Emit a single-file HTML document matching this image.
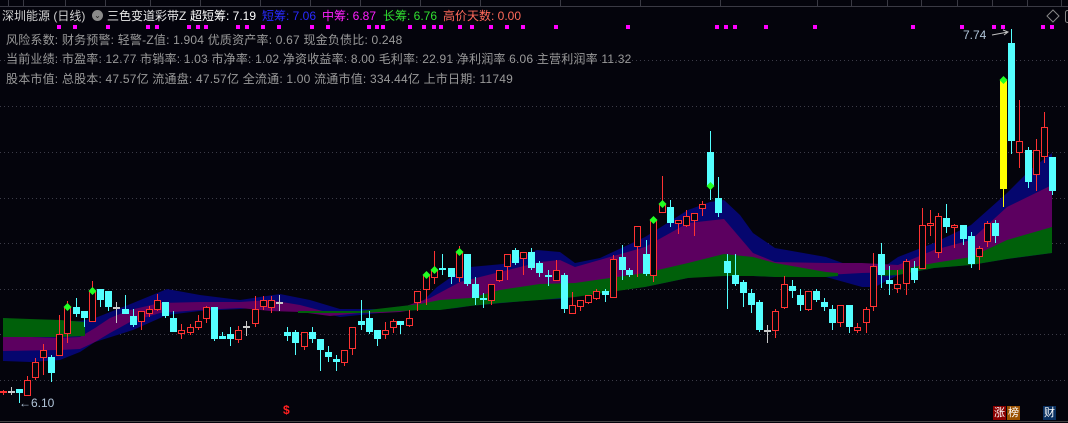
<!DOCTYPE html>
<html><head><meta charset="utf-8">
<style>
html,body{margin:0;padding:0;background:#04040c;}
body{width:1068px;height:423px;position:relative;overflow:hidden;font-family:"Liberation Sans","Noto Sans CJK SC",sans-serif;font-size:12px;}
.t{position:absolute;white-space:nowrap;line-height:14px;}
.l{letter-spacing:0.2px}
svg{position:absolute;left:0;top:0;}
</style></head><body>
<svg id="s" width="1068" height="423" viewBox="0 0 1068 423"></svg>
<div class="t" style="left:2px;top:9px;color:#d0d0d0">深圳能源 (日线)</div>
<div class="t" style="left:92px;top:10px;width:11px;height:11px;border-radius:50%;background:#8a8a8a;color:#222;font-size:8px;line-height:11px;text-align:center">⌄</div>
<div class="t" style="left:107px;top:9px;color:#e8e8e8">三色变道彩带Z</div>
<div class="t" style="left:190px;top:9px;color:#ffffff">超短筹: 7.19</div>
<div class="t" style="left:262px;top:9px;color:#2a2aff">短筹: 7.06</div>
<div class="t" style="left:322px;top:9px;color:#ff20ff">中筹: 6.87</div>
<div class="t" style="left:383px;top:9px;color:#30e030">长筹: 6.76</div>
<div class="t" style="left:443px;top:9px;color:#ff6a5a">高价天数: 0.00</div>
<div class="t l" style="left:6px;top:33px;color:#9a9a9a">风险系数: 财务预警: 轻警-Z值: 1.904 优质资产率: 0.67 现金负债比: 0.248</div>
<div class="t l" style="left:6px;top:52px;color:#9a9a9a">当前业绩: 市盈率: 12.77 市销率: 1.03 市净率: 1.02 净资收益率: 8.00 毛利率: 22.91 净利润率 6.06 主营利润率 11.32</div>
<div class="t l" style="left:6px;top:72px;color:#9a9a9a">股本市值: 总股本: 47.57亿 流通盘: 47.57亿 全流通: 1.00 流通市值: 334.44亿 上市日期: 11749</div>
<div class="t" style="left:963px;top:28px;color:#b0c4d8;font-size:12px">7.74</div>
<div class="t" style="left:19px;top:396px;color:#b0c4d8;font-size:12px">←6.10</div>
<div class="t" style="left:283px;top:403px;color:#ff2020;font-size:12px;font-weight:bold">$</div>
<div class="t" style="left:993px;top:406px;background:#8a0000;color:#fff;font-size:11px;line-height:14px;padding:0 1px">涨</div>
<div class="t" style="left:1007px;top:406px;background:#9a5000;color:#fff;font-size:11px;line-height:14px;padding:0 1px">榜</div>
<div class="t" style="left:1043px;top:406px;background:#0a3060;color:#fff;font-size:11px;line-height:14px;padding:0 1px">财</div>
<script>
var s=document.getElementById('s');var h='';
h+='<line x1="0" y1="6.5" x2="1068" y2="6.5" stroke="#3a3a44"/>';
[8,23,65,105,150,200,260,310,360,420,480,560,640,720,817,851,887,921,957,992,1027,1061].forEach(function(x){h+='<line x1="'+x+'.5" y1="0" x2="'+x+'.5" y2="6" stroke="#3a3a44"/>';});
[60,106,152,198,243,289,334,380].forEach(function(y){h+='<line x1="0" y1="'+y+'.5" x2="1068" y2="'+y+'.5" stroke="#3c3c48" stroke-dasharray="1 3"/>';});
h+='<line x1="0" y1="421.5" x2="1068" y2="421.5" stroke="#444"/>';
function band(a,c){var p='M';a.forEach(function(q,i){p+=(i?'L':'')+q[0]+' '+q[1];});for(var i=a.length-1;i>=0;i--)p+='L'+a[i][0]+' '+a[i][2];h+='<path d="'+p+'Z" fill="'+c+'"/>';}
band([[3,318,361],[30,320,362],[60,322,360],[80,321,352],[95,318,342],[133,303,330],[167,289,315],[200,295,311],[240,300,309],[280,294,306],[310,300,310],[340,309,317],[380,309,313],[420,304,309],[437,287,310],[457,273,308],[470,267,306],[503,264,303],[537,250,300],[560,252,299],[575,263,297],[600,258,292],[645,237,287],[688,210,278],[710,202,276],[724,200,276],[740,215,276],[753,233,276],[775,248,277],[826,257,277],[862,270,287],[875,273,287],[898,257,275],[934,243,268],[971,225,265],[1007,193,259],[1030,170,256],[1052,153,253]],'#05066e');
band([[3,336,351],[60,338,350],[80,337,349],[95,328,342],[110,318,333],[130,310,322],[160,303,313],[200,302,310],[240,302,308],[270,300,311],[300,305,312],[330,313,316],[360,312,313],[380,310,313],[400,308,312],[430,298,307],[460,282,300],[500,272,297],[540,262,290],[560,260,288],[575,267,290],[645,247,280],[688,223,270],[724,219,265],[753,253,268],[775,262,270],[826,263,275],[862,263,273],[898,265,272],[934,250,266],[971,240,262],[1007,207,255],[1052,185,250]],'#5c0060');
var G='#00600a';
band([[3,318,337],[30,319,337],[60,320,337],[85,322,336]],G);
band([[298,311,313],[360,311,313],[420,304,310],[440,300,310],[470,298,306],[500,290,303],[540,284,300],[575,283,297],[645,273,287],[688,263,278],[724,254,276],[753,257,276],[775,263,277],[826,272,277],[838,273,276]],G);
band([[880,270,276],[898,270,275],[934,263,268],[971,257,265],[1007,240,259],[1052,227,253]],G);
var C=[[3,'r',391,393,390,395],[11,'g',391,391,387,395],[19,'c',389,393,389,403],[27,'r',380,396,376,396],[35,'r',362,378,358,380],[43,'r',350,358,344,375],[51,'c',357,373,355,382],[59,'r',334,356,315,356],[67,'r',307,334,301,343,1],[76,'c',307,314,298,317],[84,'c',311,318,311,327],[92,'r',291,322,281,322,1],[100,'c',289,300,289,307],[108,'c',291,307,291,311],[116,'g',307,307,302,323],[125,'c',309,314,295,314],[133,'c',316,325,309,327],[141,'r',311,322,311,330],[149,'r',309,314,306,317],[157,'r',300,310,294,311],[165,'c',302,316,302,318],[173,'c',318,332,311,332],[181,'r',330,334,324,339],[190,'r',327,333,324,335],[198,'r',321,328,315,330],[206,'r',307,319,306,323],[214,'c',307,339,307,341],[222,'c',336,339,332,339],[230,'c',334,339,327,346],[238,'r',330,340,326,343],[246,'g',326,326,321,336],[255,'r',309,324,296,327],[263,'r',300,307,296,310],[271,'r',300,308,296,313],[279,'g',302,302,295,311],[287,'c',332,336,327,341],[295,'c',332,343,330,355],[304,'r',332,347,332,350],[312,'c',332,339,327,343],[320,'c',339,350,339,371],[328,'c',352,357,346,362],[336,'c',359,362,355,371],[344,'r',350,363,350,366],[352,'r',327,349,327,355],[361,'c',321,325,300,330],[369,'c',318,332,311,334],[377,'c',330,339,330,346],[385,'r',330,335,322,339],[393,'r',321,328,319,333],[400,'c',321,325,321,334],[409,'r',318,326,310,327],[417,'r',291,303,291,311],[426,'r',275,290,275,305,1],[434,'r',270,278,251,284,1],[442,'c',268,270,254,275],[451,'c',268,277,268,284],[459,'r',252,278,246,282,1],[467,'c',254,284,254,286],[475,'c',284,298,277,305],[483,'c',298,300,293,308],[491,'r',284,301,284,305],[499,'r',270,281,270,282],[507,'r',254,267,254,280],[515,'c',250,263,248,265],[523,'r',252,259,252,275],[531,'c',252,268,248,270],[539,'c',263,273,261,277],[548,'c',275,277,270,286],[556,'r',270,281,260,281],[564,'c',275,309,273,313],[572,'r',305,314,292,314],[580,'r',300,307,300,311],[588,'r',295,303,295,304],[596,'r',291,299,289,300],[605,'c',291,295,289,302],[613,'r',259,298,255,298],[622,'c',257,270,245,280],[629,'c',270,275,268,277],[637,'r',226,247,226,277],[646,'c',254,274,240,276],[653,'r',220,276,220,282,1],[662,'r',204,213,176,213,1],[670,'c',207,223,200,227],[678,'r',220,224,220,234],[686,'r',216,226,210,227],[694,'r',213,221,213,236],[702,'r',204,209,201,216],[710,'c',152,186,131,200,2],[718,'c',198,213,177,217],[727,'c',261,273,254,309],[735,'c',275,284,254,286],[743,'c',282,293,280,307],[751,'c',293,305,289,313],[759,'c',302,330,300,332],[767,'g',330,330,325,343],[775,'r',311,331,309,338],[784,'r',284,308,276,309],[792,'c',286,291,280,298],[800,'c',295,305,289,311],[808,'r',291,310,291,311],[816,'c',291,300,289,302],[824,'c',302,307,298,311],[832,'c',309,323,305,330],[840,'r',305,323,305,327],[849,'c',305,327,305,333],[857,'r',327,331,323,333],[866,'r',309,323,307,333],[873,'r',266,307,253,311],[881,'c',254,275,243,288],[889,'c',280,284,266,295],[897,'r',284,289,270,293],[906,'r',261,284,259,295],[914,'c',268,280,261,283],[922,'r',225,269,208,269],[930,'r',223,226,210,236],[938,'r',216,253,213,258],[946,'c',218,227,204,233],[954,'r',225,228,224,248],[963,'c',225,239,225,245],[971,'c',236,264,232,268],[979,'r',248,257,246,270],[987,'r',223,242,221,247],[995,'c',223,236,220,243],[1003,'y',80,189,80,207,1],[1011,'c',43,141,29,154],[1019,'r',141,153,100,168],[1028,'c',150,182,147,188],[1036,'r',150,175,139,191],[1044,'r',127,157,112,163],[1052,'c',157,191,157,195]];
var diam=[];
C.forEach(function(c){var x=c[0],t=c[1],bt=c[2],bb=c[3],wt=c[4],wb=c[5];
var col=t=='r'?'#ff3232':t=='c'?'#54ffff':t=='y'?'#ffff00':'#c8c8c8';
h+='<line x1="'+(x+.5)+'" y1="'+wt+'" x2="'+(x+.5)+'" y2="'+wb+'" stroke="'+col+'"/>';
if(t=='g'||bb-bt<1){h+='<rect x="'+(x-3)+'" y="'+bt+'" width="7" height="2" fill="'+col+'"/>';}
else if(t=='r'){h+='<rect x="'+(x-2.5)+'" y="'+(bt+.5)+'" width="6" height="'+(bb-bt-1)+'" fill="#04040c" stroke="'+col+'"/>';}
else{h+='<rect x="'+(x-3)+'" y="'+bt+'" width="7" height="'+(bb-bt)+'" fill="'+col+'"/>';}
if(c[6]){var dy=c[6]==2?bb:bt;diam.push([x,dy]);}
});
diam.forEach(function(d){h+='<path d="M'+(d[0]+.5)+' '+(d[1]-4)+'L'+(d[0]+4.5)+' '+d[1]+'L'+(d[0]+.5)+' '+(d[1]+4)+'L'+(d[0]-3.5)+' '+d[1]+'Z" fill="#22ff22"/>';});
[59,75,108,148,157,189,198,206,238,247,263,279,312,328,369,377,383,410,424,434,441,460,472,491,507,523,556,628,717,726,735,766,815,913,962,994,1003,1043,1052].forEach(function(x){h+='<rect x="'+(x-2)+'" y="25" width="4" height="4" fill="#ff00ff"/>';});
h+='<path d="M992 35 L1008 32 M1003 30 L1008 32 L1004 35" stroke="#c0c0c0" fill="none"/>';
h+='<path d="M1053 10 L1059 16 L1053 22 L1047 16 Z" stroke="#888" fill="none"/>';
h+='<rect x="1065.5" y="10.5" width="6" height="12" rx="2" stroke="#888" fill="none"/>';
s.innerHTML=h;
</script>
</body></html>
